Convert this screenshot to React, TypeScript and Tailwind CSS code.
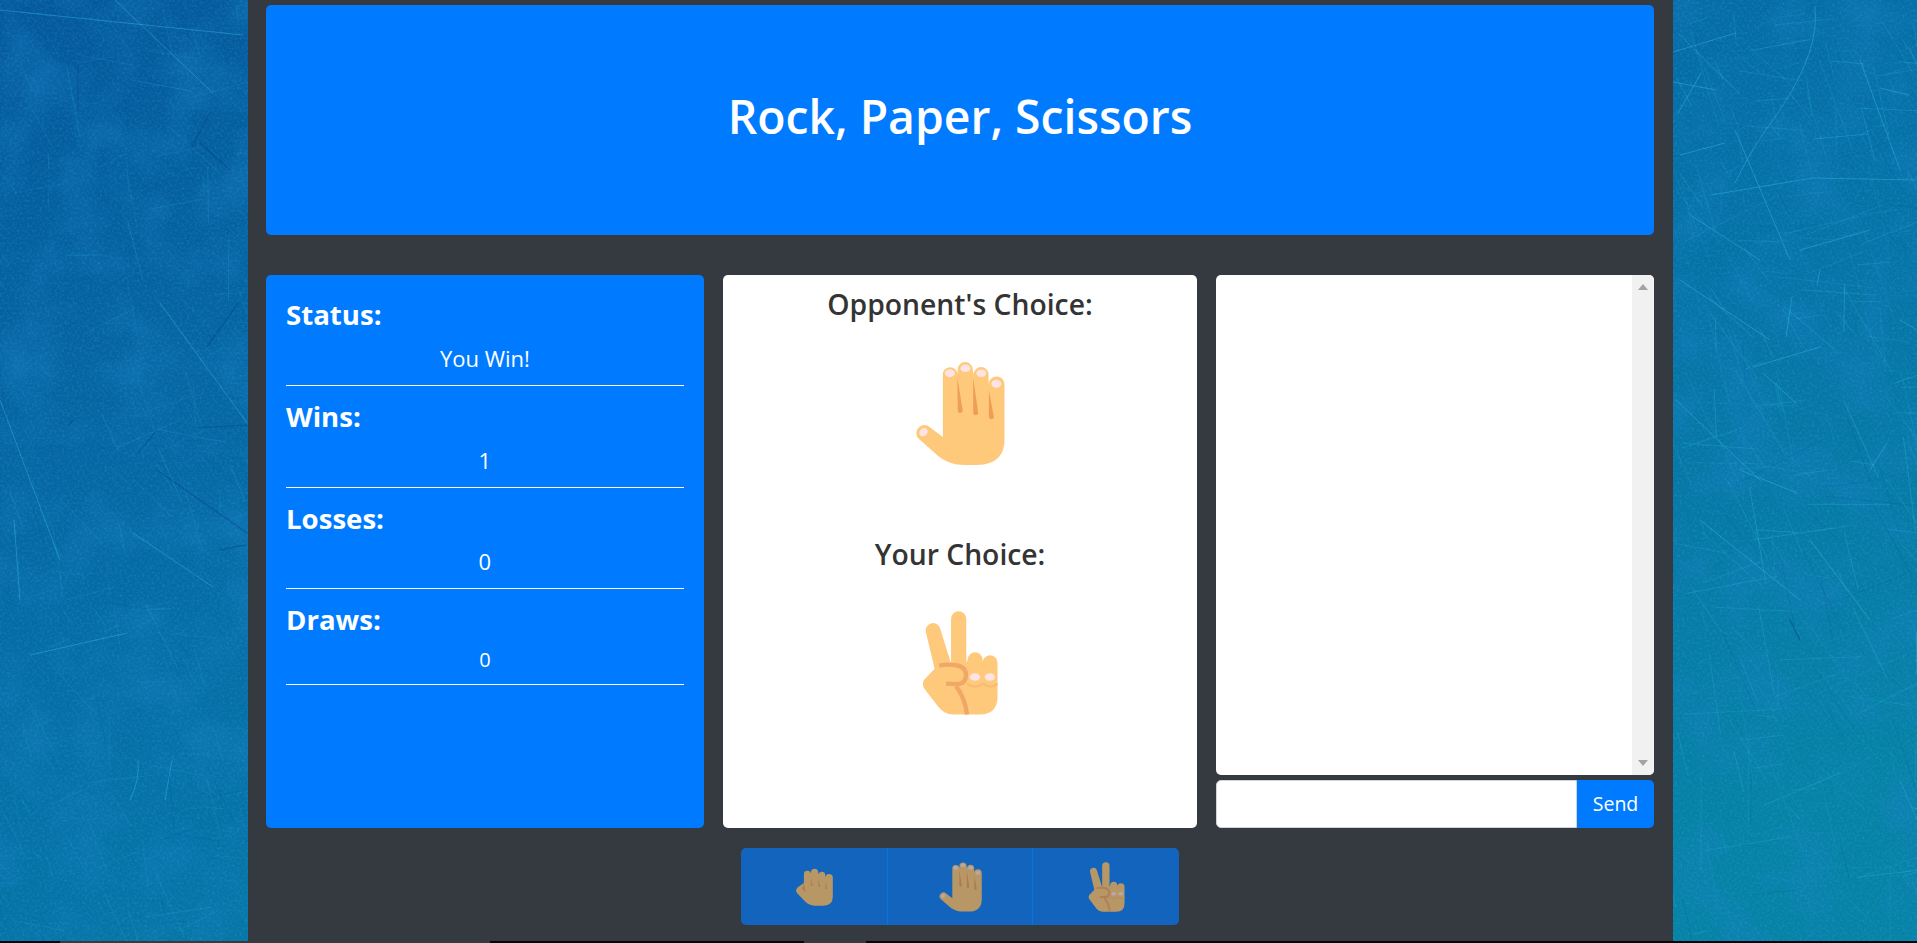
import { useMemo, type ReactNode } from "react";

const FONT = "font-['Open_Sans','Noto_Sans',sans-serif]";

type Scratch = { d: string; color: string; opacity: number; width: number };

// scratches that are easy to spot in the picture, the rest is seeded noise below
const LIGHT_SCRATCHES = [
  "M115 0L213 93", "M0 10L243 35", "M160 303L247 423", "M133 533L213 587", "M30 655L127 633",
  "M138 760Q140 780 130 800", "M165 800L172 760", "M0 400L60 560", "M14 520L20 600",
  "M1815 7Q1820 50 1780 110Q1750 150 1735 183", "M1673 52L1736 33", "M1678 113L1701 73",
  "M1680 155L1725 143", "M1711 195L1813 178L1916 180", "M1673 82L1716 90", "M1820 270L1817 285",
  "M1786 337L1792 297", "M1753 367L1820 347", "M1763 373L1796 403", "M1887 443L1870 470",
  "M1740 470L1797 493", "M1800 250L1870 230", "M1880 88L1909 95", "M1900 320L1917 330",
  "M1735 130L1790 260", "M1860 60L1900 170", "M1690 215L1760 260", "M1680 280L1770 340",
  "M1676 400L1760 480", "M1810 540L1870 620", "M1700 520L1800 600",
];
const DARK_SCRATCHES = [
  "M78 67L78 110", "M210 113L192 147", "M200 143L230 170", "M238 303L207 347", "M157 430L138 453",
  "M157 470L247 533", "M195 428L247 425", "M73 420L68 426", "M220 550L245 545", "M1790 620L1800 640",
];

function buildScratches(): Scratch[] {
  let seed = 41;
  const rnd = () => {
    seed = (seed * 16807) % 2147483647;
    return seed / 2147483647;
  };
  const out: Scratch[] = [];
  for (const d of LIGHT_SCRATCHES) out.push({ d, color: "#3cc8ea", opacity: 0.42, width: 0.9 });
  for (const d of DARK_SCRATCHES) out.push({ d, color: "#05408c", opacity: 0.5, width: 1.1 });
  for (let i = 0; i < 520; i++) {
    const right = i % 5 > 1;
    const x = right ? 1673 + rnd() * 244 : rnd() * 248;
    const y = rnd() * 943;
    const steep = rnd() > 0.35;
    const len = 12 + rnd() * (right ? 90 : 60);
    const ang = steep ? 0.7 + rnd() * 0.9 : -0.5 + rnd() * 0.7;
    const x2 = x + Math.cos(ang) * len;
    const y2 = y + Math.sin(ang) * len;
    const dark = rnd() > (right ? 0.85 : 0.72);
    out.push({
      d: `M${x.toFixed(1)} ${y.toFixed(1)}L${x2.toFixed(1)} ${y2.toFixed(1)}`,
      color: dark ? "#0650a0" : "#2fbce4",
      opacity: dark ? 0.25 : 0.1 + rnd() * (right ? 0.28 : 0.16),
      width: 0.6 + rnd() * 0.4,
    });
  }
  return out;
}

function Texture() {
  const scratches = useMemo(buildScratches, []);
  return (
    <svg aria-hidden="true" className="absolute inset-0 h-full w-full" viewBox="0 0 1917 943" preserveAspectRatio="none">
      <defs>
        <linearGradient id="wall" x1="0" y1="0" x2="0.75" y2="1">
          <stop offset="0" stopColor="#04589c" />
          <stop offset="0.45" stopColor="#056ca6" />
          <stop offset="1" stopColor="#0682a6" />
        </linearGradient>
        <filter id="grain" x="0" y="0" width="100%" height="100%">
          <feTurbulence type="fractalNoise" baseFrequency="0.4" numOctaves="2" seed="7" />
          <feColorMatrix values="0 0 0 0 0.1  0 0 0 0 0.5  0 0 0 0 0.8  1.4 0 0 0 -0.6" />
        </filter>
        <filter id="mottle" x="0" y="0" width="100%" height="100%">
          <feTurbulence type="fractalNoise" baseFrequency="0.018" numOctaves="3" seed="3" />
          <feColorMatrix values="0 0 0 0 0.01  0 0 0 0 0.22  0 0 0 0 0.55  2 0 0 0 -0.85" />
        </filter>
      </defs>
      <rect width="1917" height="943" fill="url(#wall)" />
      <rect width="1917" height="943" filter="url(#mottle)" opacity="0.45" />
      <rect width="1917" height="943" filter="url(#grain)" opacity="0.3" />
      {scratches.map((s, i) => (
        <path key={i} d={s.d} fill="none" stroke={s.color} strokeOpacity={s.opacity} strokeWidth={s.width} strokeLinecap="round" />
      ))}
    </svg>
  );
}

function PaperHand({ className }: { className: string }) {
  return (
    <svg aria-hidden="true" className={className} viewBox="55 21 90.5 104.5">
      <path
        fill="#ffc97c"
        d="M83 97L83 34A7.3 7.3 0 0 1 97.6 34L98 29A7.5 7.5 0 0 1 113 29L114 34A7.5 7.5 0 0 1 129 34L129 44A8 8 0 0 1 145 44L145 100C145 117 134 125 118 125L105 125C92 125 84 121 76 114L59 99A8 8 0 0 1 70 87Z"
      />
      <path fill="#ee9f55" d="M97.6 37L103 70.5A2.6 2.6 0 0 1 98 71ZM113.5 37L118.6 73A2.6 2.6 0 0 1 113.5 73ZM129.3 50L134.4 77A2.6 2.6 0 0 1 129.3 77Z" />
      <g fill="#fde3e4">
        <ellipse cx="90" cy="32.8" rx="5" ry="4" />
        <ellipse cx="105.7" cy="27.8" rx="5" ry="3.8" />
        <ellipse cx="121.7" cy="32.8" rx="5" ry="3.8" />
        <ellipse cx="136.8" cy="43.4" rx="5" ry="4" />
        <ellipse cx="63.6" cy="92" rx="4.6" ry="3.8" transform="rotate(-45 63.6 92)" />
      </g>
    </svg>
  );
}

function ScissorsHand({ className }: { className: string }) {
  return (
    <svg aria-hidden="true" className={className} viewBox="41 21 76 104.5">
      <path
        fill="#ffc97c"
        d="M70 74L70 29A7.6 7.6 0 0 1 85.3 29L85.3 73L86.7 70A7.5 7.5 0 0 1 101.7 70L101.7 73A7.5 7.5 0 0 1 116.7 73L116.7 107Q116.7 125 99 125L72 125Q63 125 57 117L42.5 98Q40.5 93 43 90L53.5 79L44.7 42A7.4 7.4 0 0 1 58.7 37.5L69.5 72Z"
      />
      <g fill="none" stroke="#f0a868" strokeWidth="4.4">
        <path d="M58 76Q66 74 75 75.5Q85 77 85 85Q85 94 76 94.5L65 94" />
        <path d="M75 96.5Q84 108 86 125" />
        <path d="M86 94Q94 100 102 94Q110 100 116.7 94" stroke="#f7bb72" strokeWidth="2.4" />
      </g>
      <g fill="#fde3e4">
        <ellipse cx="94" cy="87.3" rx="5.2" ry="3.8" />
        <ellipse cx="109" cy="87.3" rx="5.2" ry="3.8" />
      </g>
    </svg>
  );
}

function RockHand({ className }: { className: string }) {
  return (
    <svg aria-hidden="true" className={className} viewBox="16 12 37.5 38">
      <path
        fill="#ffc97c"
        d="M24 27L24 18.5A3.6 3.6 0 0 1 31 17L31.2 15.5A3.7 3.7 0 0 1 38.5 15.5L38.7 18A3.6 3.6 0 0 1 45.7 18.5L45.9 21.5A3.7 3.7 0 0 1 53.3 21.5L53.3 41Q53.3 50 44 50L36 50Q30 50 26 46.5L17 37Q15 34 17.5 31.5Z"
      />
      <path fill="#f2a75f" d="M31 21L33 30L31 30ZM38.7 22L40.7 31L38.7 31ZM45.9 25L47.9 33L45.9 33ZM24 27L26 36L22 33Z" />
    </svg>
  );
}

function Stat({ label, value, padTop, valueClass }: { label: string; value: string; padTop: string; valueClass: string }) {
  return (
    <div className={`border-b border-white ${padTop}`}>
      <h4 className="h-[38px] text-[27.6px] font-bold leading-[38px]">{label}</h4>
      <p className={`text-center ${valueClass}`}>{value}</p>
    </div>
  );
}

function PickButton({ children, grow }: { children: ReactNode; grow: string }) {
  return (
    <button type="button" className={`flex h-full items-center justify-center bg-[#007bff] opacity-65 ${grow}`}>
      {children}
    </button>
  );
}

export default function App() {
  return (
    <div className={`relative flex h-[943px] w-[1917px] flex-col overflow-hidden bg-[#0a0c10] text-white ${FONT}`}>
      <Texture />
      <main className="relative mr-[244px] ml-[248px] h-[941px] w-[1425px] bg-[#343a40] pt-[5px] pr-[19px] pl-[18px]">
        <header className="flex h-[230px] items-center justify-center rounded-[5px] bg-[#007bff]">
          <h1 className="-mt-[5px] text-[46.3px] font-semibold leading-none">Rock, Paper, Scissors</h1>
        </header>

        <div className="mt-[40px] flex h-[553px] gap-[19px]">
          <section className="w-[438px] rounded-[5px] bg-[#007bff] p-[20px]">
            <Stat label="Status:" value="You Win!" padTop="" valueClass="h-[52px] text-[22px] leading-[50px]" />
            <Stat label="Wins:" value="1" padTop="pt-[11px]" valueClass="h-[52px] text-[22px] leading-[50px]" />
            <Stat label="Losses:" value="0" padTop="pt-[11px]" valueClass="h-[51px] text-[22px] leading-[48px]" />
            <Stat label="Draws:" value="0" padTop="pt-[11px]" valueClass="h-[46px] text-[20px] leading-[44px]" />
          </section>

          <section className="flex w-[475px] flex-col items-center rounded-[5px] bg-white text-[#343434]">
            <h3 className="mt-[11px] h-[36px] text-[28.3px] font-semibold leading-[36px]">Opponent's Choice:</h3>
            <PaperHand className="mt-[39px] h-[105px] w-[90px]" />
            <h3 className="mt-[70px] h-[36px] text-[28.3px] font-semibold leading-[36px]">Your Choice:</h3>
            <ScissorsHand className="mt-[39px] h-[104px] w-[76px]" />
          </section>

          <section className="flex w-[438px] flex-col">
            <div className="flex h-[500px] justify-end overflow-hidden rounded-[5px] bg-white">
              <div className="flex w-[22px] flex-col items-center justify-between bg-[#f1f1f1] py-[9px]">
                <svg aria-hidden="true" width="10" height="6" viewBox="0 0 10 6"><path d="M5 0L10 6H0Z" fill="#a3a3a3" /></svg>
                <svg aria-hidden="true" width="10" height="6" viewBox="0 0 10 6"><path d="M0 0H10L5 6Z" fill="#a3a3a3" /></svg>
              </div>
            </div>
            <form className="mt-[5px] flex h-[48px]">
              <input aria-label="Message" className="min-w-0 flex-1 rounded-l-[5px] border border-[#ced4da] bg-white outline-none" />
              <button type="button" className="w-[77px] rounded-r-[5px] bg-[#007bff] text-[19.5px]">Send</button>
            </form>
          </section>
        </div>

        <div className="mx-auto mt-[20px] flex h-[77px] w-[438px] overflow-hidden rounded-[5px]">
          <PickButton grow="w-[146px]"><RockHand className="h-[38px] w-[37px]" /></PickButton>
          <div className="w-px bg-[#0a72e0]" />
          <PickButton grow="w-[144px]"><PaperHand className="h-[50px] w-[43px]" /></PickButton>
          <div className="w-px bg-[#0a72e0]" />
          <PickButton grow="w-[146px]"><ScissorsHand className="h-[50px] w-[37px]" /></PickButton>
        </div>
      </main>
      <footer className="relative flex h-[2px]">
        <div className="w-[60px] bg-[#05070b]" />
        <div className="w-[430px] bg-[#3a3a3c]" />
        <div className="w-[314px] bg-[#05070b]" />
        <div className="w-[62px] bg-[#3a3a3c]" />
        <div className="flex-1 bg-[#05070b]" />
      </footer>
    </div>
  );
}
